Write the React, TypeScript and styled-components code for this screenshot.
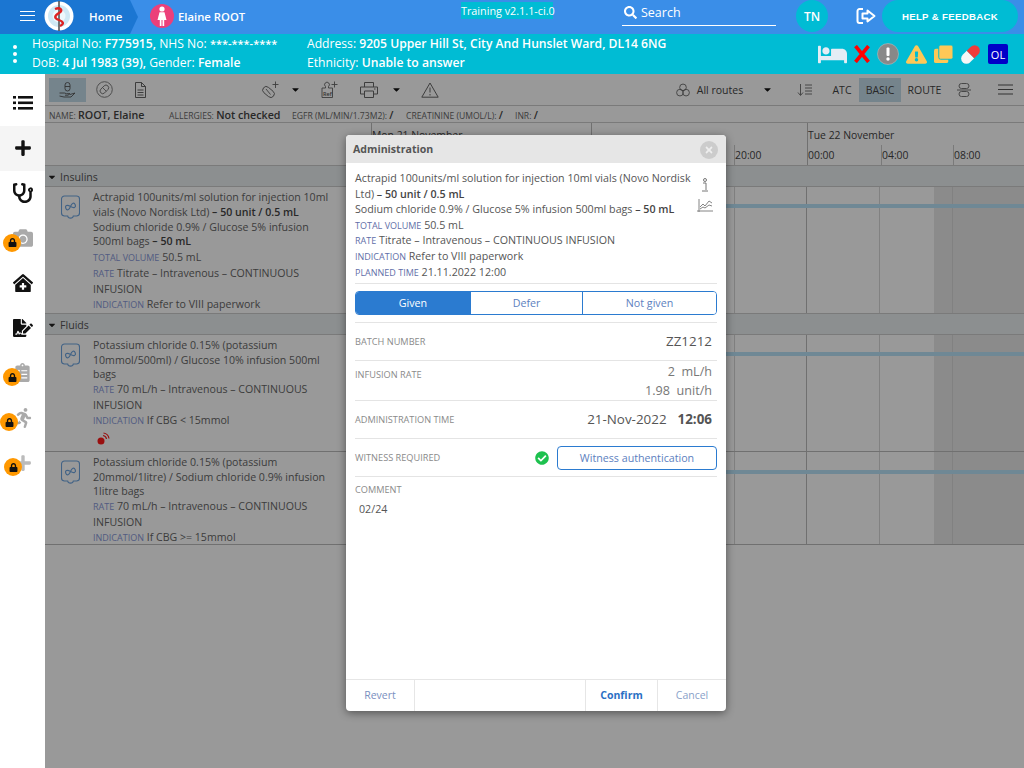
import React from "react";
import styled, { createGlobalStyle } from "styled-components";
import {
  FaBed, FaExclamationTriangle, FaStethoscope, FaClinicMedical, FaFileSignature,
  FaPlus, FaCamera, FaLock, FaRunning, FaCheckCircle, FaCaretDown, FaSearch, FaClipboardList, FaTimes,
} from "react-icons/fa";

const Global = createGlobalStyle`
  html, body { margin: 0; padding: 0; height: 100%; background: #fff; overflow: hidden; }
  * { box-sizing: border-box; }
  body { font-family: "Open Sans", "Noto Sans", sans-serif; color: #333; }
`;

const Page = styled.div`width: 1024px; height: 768px; display: flex; flex-direction: column; position: relative; overflow: hidden;`;
const TopBar = styled.header`height: 34px; padding-bottom: 2px; background: #3a8ee8; display: flex; align-items: center; color: #fff; flex: none;`;
const HomeCrumb = styled.div`
  width: 138px; height: 34px; margin-bottom: -2px; padding-bottom: 2px; background: #1b76d2; clip-path: polygon(0 0, 130px 0, 138px 17px, 130px 34px, 0 34px);
  display: flex; align-items: center; padding-left: 20px; flex: none;
`;
const Burger = styled.div`width: 15px; height: 10px; border-top: 1px solid #fff; border-bottom: 1px solid #fff; position: relative; margin-right: 9px;
  &::after { content: ""; position: absolute; left: 0; right: 0; top: 3px; height: 1px; background: #fff; }
`;
const HomeLabel = styled.span`font-size: 11.5px; font-weight: 600; margin-left: 15px;`;
const Avatar = styled.div`width: 24px; height: 24px; border-radius: 50%; background: #ec407a; margin-left: 12px; display: flex; align-items: center; justify-content: center; flex: none;`;
const PatientName = styled.span`font-size: 11.3px; font-weight: 600; margin-left: 4px; width: 283px; flex: none;`;
const TrainingTag = styled.div`font-size: 10.8px; line-height: 17px; height: 17px; background: #00bcd4; width: 92px; margin-top: -11px; white-space: nowrap; flex: none; text-align: center;`;
const SearchBox = styled.div`width: 154px; height: 25px; margin-left: 69px; border-bottom: 1px solid #fff; display: flex; align-items: center; gap: 4px; padding: 0 0 1px 2px; font-size: 12.5px; flex: none; position: relative; top: -2.5px;`;
const Initials = styled.div`width: 32px; height: 32px; border-radius: 50%; background: #00bcd4; margin-left: 20px; display: flex; align-items: center; justify-content: center; font-size: 12px; font-weight: 600; flex: none;`;
const LogoutBox = styled.div`width: 20px; margin-left: 28px; display: flex; flex: none;`;
const HelpButton = styled.div`width: 136px; height: 32px; border-radius: 16px; background: #00bcd4; margin-left: 6px; display: flex; align-items: center; justify-content: center; font: 700 9.6px "Liberation Sans", Arial, sans-serif; letter-spacing: .35px; flex: none;`;

const InfoBar = styled.div`height: 40px; background: #00bcd4; color: #fff; display: flex; align-items: center; font-size: 12.15px; flex: none; position: relative;`;
const Dots = styled.div`width: 32px; display: flex; flex-direction: column; align-items: center; gap: 3px; flex: none; padding-right: 2px;
  i { width: 4px; height: 4px; border-radius: 50%; background: #fff; display: block; }
`;
const InfoCol = styled.div<{ $w: number }>`width: ${p => p.$w}px; flex: none; line-height: 18.6px; white-space: nowrap;
  b { font-weight: 600; }
`;
const Mask = styled.b`font-size: 11px;`;
const StatusIcons = styled.div`display: flex; align-items: center; flex: 1; justify-content: flex-end; padding-right: 16px; gap: 7px;`;
const OLBadge = styled.div`width: 20px; height: 20px; background: #0000c8; border-radius: 2px; font-size: 11px; color: #fff; display: flex; align-items: center; justify-content: center;`;

const Body = styled.div`flex: 1; display: flex; min-height: 0;`;
const Sidebar = styled.nav`width: 45px; padding-top: 7px; flex: none; background: #fff; display: flex; flex-direction: column;`;
const SideItem = styled.div<{ $active?: boolean }>`height: 44.9px; display: flex; align-items: center; justify-content: center; position: relative; background: ${p => (p.$active ? "#f5f5f5" : "transparent")}; color: #111; flex: none;`;
const LockBadge = styled.div<{ $left: number }>`position: absolute; left: ${p => p.$left}px; top: 18px; width: 18px; height: 18px; border-radius: 50%; background: #ff9800; color: #111; display: flex; align-items: center; justify-content: center;`;

const Main = styled.main`flex: 1; position: relative; display: flex; flex-direction: column; min-width: 0; background: #fff;`;
const Toolbar = styled.div`height: 32px; display: flex; align-items: center; padding-left: 4px; border-bottom: 1px solid #ccc; flex: none;`;
const ToolSlot = styled.div<{ $w: number; $active?: boolean }>`width: ${p => p.$w}px; height: 24px; display: flex; align-items: center; justify-content: center; flex: none; background: ${p => (p.$active ? "#c4dcea" : "transparent")}; font-size: 10.5px; color: #444; white-space: nowrap;`;
const ToolGap = styled.div<{ $w: number }>`width: ${p => p.$w}px; flex: none;`;
const PatientLine = styled.div`height: 17px; padding: 1px 0 0 4px; display: flex; align-items: center; font-size: 8.6px; text-transform: uppercase; color: #666; flex: none; border-bottom: 1px solid #ccc; white-space: nowrap;`;
const LineItem = styled.div<{ $w: number }>`width: ${p => p.$w}px; flex: none; b { font-size: 10.7px; font-weight: 600; color: #444; text-transform: none; }`;

const TimeHead = styled.div`height: 43px; display: flex; padding-left: 326px; border-bottom: 1px solid #ccc; flex: none;`;
const DayCol = styled.div<{ $w: number }>`width: ${p => p.$w}px; flex: none; border-left: 1px solid #bbb; display: flex; flex-direction: column; font-size: 10.4px; color: #444; white-space: nowrap;`;
const DayName = styled.div`height: 22px; padding: 5px 0 0 0; line-height: 14px;`;
const Hours = styled.div`flex: 1; display: flex;`;
const Hour = styled.div<{ $w: number; $first?: boolean }>`width: ${p => p.$w}px; flex: none; padding: 3px 0 0 0; line-height: 15px; border-left: ${p => (p.$first ? "none" : "1px solid #ccc")};`;

const GroupHead = styled.div<{ $h: number; $top?: boolean }>`height: ${p => p.$h}px; display: flex; align-items: center; background: #eaeef0; border-bottom: 1px solid #ccc; border-top: ${p => (p.$top ? "1px solid #ccc" : "none")}; padding: 1px 0 0 2px; gap: 3px; font-size: 10.6px; color: #555; flex: none;`;
const MedRow = styled.div<{ $h: number; $line?: boolean }>`height: ${p => p.$h}px; display: flex; flex: none; border-bottom: ${p => (p.$line ? "1px solid #bbb" : "none")};`;
const MedInfo = styled.div`width: 326px; flex: none; display: flex; padding: 3px 0 0 16px;`;
const BagBox = styled.div`width: 32px; padding-top: 5px; flex: none;`;
const MedText = styled.div`width: 240px; font-size: 10.6px; line-height: 14.6px; color: #666; flex: none;
  b { font-weight: 600; color: #444; }
  p { margin: 0; }
  p + p { margin-top: .7px; }
`;
const RowTag = styled.span`font-size: 9px; color: #8898d8; text-transform: uppercase;`;
const Alarm = styled.div`margin: 2px 0 0 4px; line-height: 0;`;
const Timeline = styled.div<{ $bar: number }>`flex: 1; display: flex; position: relative;
  &::after { content: ""; position: absolute; left: 0; right: 0; top: ${p => p.$bar}px; height: 3.5px; background: #b9e3f8; }
`;
const GridCell = styled.div<{ $w: number; $strong?: boolean }>`
  width: ${p => p.$w}px; flex: none; border-left: 1px solid ${p => (p.$strong ? "#bbb" : "#d8d8d8")};
`;
const GridFill = styled.div`flex: 1; background: linear-gradient(to right, #e8e8e8 18px, #d8d8d8 18px, #d8d8d8 19px, #e8e8e8 19px);`;

const Scrim = styled.div`position: absolute; inset: 0; background: rgba(0,0,0,.4);`;
const Modal = styled.div`position: absolute; left: 346px; top: 135px; width: 380px; height: 576px; background: #fff; border-radius: 4px; box-shadow: 0 2px 8px rgba(0,0,0,.45); display: flex; flex-direction: column; overflow: hidden;`;
const ModalHead = styled.div`height: 28px; background: #e6e6e6; display: flex; align-items: center; justify-content: space-between; padding: 0 8px 1px 7px; flex: none; font-size: 10.6px; font-weight: 700; color: #555;`;
const CloseDot = styled.div`width: 18px; height: 18px; border-radius: 50%; background: #ccc; color: #eee; display: flex; align-items: center; justify-content: center; margin-top: 2px;`;
const ModalBody = styled.div`flex: 1; padding: 7px 9px 0; display: flex; flex-direction: column; min-height: 0;`;
const Summary = styled.div`position: relative; font-size: 10.7px; line-height: 15.6px; color: #555; height: 114px; padding-top: 1px; border-bottom: 1px solid #e4e4e4; flex: none; white-space: nowrap;
  b { font-weight: 600; color: #444; }
  p { margin: 0; }
`;
const ModalTag = styled.span`font-size: 9px; color: #5f6ea8; text-transform: uppercase;`;
const SummaryIcons = styled.div`position: absolute; right: 4px; top: 8px; display: flex; flex-direction: column; align-items: center; gap: 7px; color: #777; line-height: 0;`;
const Segment = styled.div`margin-top: 7px; height: 24px; display: grid; grid-template-columns: 114px 112px 1fr; border: 1px solid #2b7bd0; border-radius: 4px; overflow: hidden; flex: none; margin-bottom: 7px;`;
const SegItem = styled.div<{ $on?: boolean }>`display: flex; align-items: center; justify-content: center; font-size: 10.7px; background: ${p => (p.$on ? "#2b7bd0" : "#fff")}; color: ${p => (p.$on ? "#fff" : "#5d7fc0")}; border-left: ${p => (p.$on ? "none" : "1px solid #2b7bd0")};`;
const FieldRow = styled.div<{ $h: number }>`height: ${p => p.$h}px; border-top: 1px solid #e4e4e4; display: flex; justify-content: space-between; align-items: center; flex: none;`;
const FieldLabel = styled.div`font-size: 9.2px; color: #8a8a8a; text-transform: uppercase; white-space: nowrap;`;
const TopLabel = styled(FieldLabel)`align-self: flex-start; padding-top: 7px;`;
const FieldValue = styled.div`font-size: 12.6px; color: #777; text-align: right; padding-right: 5px; line-height: 19px; white-space: pre;`;
const DarkValue = styled(FieldValue)`font-size: 13.4px; color: #555; b { font-weight: 700; margin-left: 11px; color: #555; }`;
const WitnessWrap = styled.div`display: flex; align-items: center; gap: 8px;`;
const WitnessBtn = styled.div`width: 160px; height: 24px; border: 1px solid #2b7bd0; border-radius: 4px; display: flex; align-items: center; justify-content: center; font-size: 10.7px; color: #5d7fc0;`;
const CommentBox = styled.div`border-top: 1px solid #e4e4e4; padding-top: 6px; flex: none;`;
const CommentText = styled.div`font-size: 10.7px; color: #555; margin: 6px 0 0 4px;`;
const ModalFoot = styled.div`height: 32px; padding-bottom: 2px; border-top: 1px solid #e6e6e6; display: flex; flex: none;`;
const FootBtn = styled.div<{ $w: number; $strong?: boolean; $light?: boolean }>`width: ${p => p.$w}px; display: flex; align-items: center; justify-content: center; font-size: 10.5px; font-weight: ${p => (p.$strong ? 700 : 400)}; color: ${p => (p.$strong ? "#2b6fc4" : p.$light ? "#8a9fc9" : "#7a8fc0")}; border-right: 1px solid #e6e6e6; flex: none; margin-bottom: -2px; padding-bottom: 2px;
  &:last-child { border-right: none; }
`;
const FootSpacer = styled.div`flex: 1; border-right: 1px solid #e6e6e6; margin-bottom: -2px;`;

const Logo = () => (
  <svg width="30" height="30" viewBox="0 0 30 30">
    <circle cx="15" cy="15" r="14.5" fill="#fff" />
    <circle cx="15" cy="15" r="11" fill="#cfe9f5" />
    <circle cx="15" cy="15" r="6.5" fill="#eef8fc" />
    <path d="M15 0v30" stroke="#555" strokeWidth="1.6" />
    <path d="M11 8c5-2 9 1 4 4s-5 5 0 7 5 4 1 6" fill="none" stroke="#d22" strokeWidth="2.4" />
  </svg>
);
const Woman = () => (
  <svg width="12" height="20" viewBox="0 0 12 20" fill="#fff">
    <circle cx="6" cy="3" r="2.6" />
    <path d="M3.5 6.2h5l2 7.8H8.2v6H6.5v-6h-1v6H3.8v-6H1.5z" />
  </svg>
);
const Logout = () => (
  <svg width="20" height="18" viewBox="0 0 20 18" fill="none" stroke="#fff" strokeWidth="2" strokeLinejoin="round">
    <path d="M7 2H3.500A2 2 0 0 0 1.500 4v10a2 2 0 0 0 2 2H7" />
    <path d="M11.500 3.500L18.500 9l-7 5.500V11.500H6.500v-5h5z" />
  </svg>
);
const ExclaimDot = () => (
  <svg width="22" height="22" viewBox="0 0 22 22">
    <circle cx="11" cy="11" r="10.500" fill="#888" stroke="#bbb" strokeWidth=".6" />
    <rect x="9.500" y="4.500" width="3" height="8.500" rx="1" fill="#fff" />
    <circle cx="11" cy="16" r="1.700" fill="#fff" />
  </svg>
);
const Bag = () => (
  <svg width="19" height="26" viewBox="0 0 19 26" fill="none" stroke="#6ea5e0" strokeWidth="1.1">
    <path d="M3.500 1h12a3 3 0 0 1 3 3v14a3 3 0 0 1-3 3h-3.200c-.4 2.800-5.200 2.800-5.600 0H3.500a3 3 0 0 1-3-3V4a3 3 0 0 1 3-3z" />
    <path d="M4.500 11.500c0-3 2.500-3 5 0s5 3 5 0-2.500-3-5 0-5 3-5 0z" transform="rotate(-20 9.500 11.500)" />
  </svg>
);
const HandDrop = () => (
  <svg width="17" height="16" viewBox="0 0 17 16" fill="none" stroke="#555" strokeWidth=".9">
    <rect x="6" y=".5" width="5" height="8.500" rx="2.500" />
    <path d="M6 4.500h5" />
    <path d="M.5 11h5l2 .7h3.500l-2 1.500H6M11 12.500l5-1.500-4 4H5l-4.500-1" />
  </svg>
);
const Ban = () => (
  <svg width="17" height="17" viewBox="0 0 24 24" fill="none" stroke="#777" strokeWidth="1.300">
    <circle cx="12" cy="12" r="11" />
    <rect x="5" y="8" width="14" height="7.500" rx="3.700" transform="rotate(-45 12 12)" />
    <path d="M9.500 9.500l5 5" />
  </svg>
);
const Doc = () => (
  <svg width="11" height="16" viewBox="0 0 11 16" fill="none" stroke="#555" strokeWidth=".9">
    <path d="M.5.500h6l4 4v11H.5zM6.500.500v4h4M2.500 8h6M2.500 10.500h6M2.500 13h6" />
  </svg>
);
const PillPlus = () => (
  <svg width="18" height="17" viewBox="0 0 18 17" fill="none" stroke="#666" strokeWidth=".9">
    <rect x="1" y="7.500" width="13" height="7" rx="3.500" transform="rotate(40 7.500 11)" />
    <path d="M5 8l4.500 5.500M14.500 .5v6.500M11.500 3.500h6" />
  </svg>
);
const RefPlus = () => (
  <svg width="17" height="17" viewBox="0 0 17 17" fill="none" stroke="#666" strokeWidth=".9">
    <path d="M1 7h3.500V5.500a2.400 2.400 0 1 1 3 0V7H11.500v9.500H1z" />
    <path d="M13.500 .5v6M10.500 3.500h6" />
    <text x="2" y="14.500" fontSize="5.500" fill="#555" stroke="none" fontFamily="Open Sans" fontWeight="600">Ref</text>
  </svg>
);
const Printer = () => (
  <svg width="18" height="16" viewBox="0 0 18 16" fill="none" stroke="#666" strokeWidth="1">
    <path d="M4.500 5V.5h9V5M4.500 12H.5V5h17v7h-4M4.500 9h9v6.500h-9zM14 7h1.500" />
  </svg>
);
const Warn = () => (
  <svg width="18" height="16" viewBox="0 0 18 16" fill="none" stroke="#666" strokeWidth="1">
    <path d="M9 1L.8 15.200h16.400zM9 5.500v5M9 12v1.500" />
  </svg>
);
const Routes = () => (
  <svg width="14" height="14" viewBox="0 0 16 16" fill="none" stroke="#666" strokeWidth="1">
    <circle cx="8" cy="5" r="3.800" /><circle cx="4.500" cy="11" r="3.800" /><circle cx="11.500" cy="11" r="3.800" />
  </svg>
);
const SortIcon = () => (
  <svg width="16" height="14" viewBox="0 0 16 14" fill="none" stroke="#777" strokeWidth="1">
    <path d="M3.500 1v11M1 9.500l2.500 3 2.500-3M8 2h7M8 5h7M8 8h7M8 11h7" />
  </svg>
);
const LinkIcon = () => (
  <svg width="14" height="16" viewBox="0 0 14 16" fill="none" stroke="#777" strokeWidth="1">
    <rect x="2" y="1.500" width="10" height="5" rx="2.500" /><rect x="2" y="9.500" width="10" height="5" rx="2.500" /><path d="M0 8h14" />
  </svg>
);
const MenuIcon = () => (
  <svg width="15" height="11" viewBox="0 0 15 11" fill="none" stroke="#555" strokeWidth="1.200">
    <path d="M0 1h15M0 5.500h15M0 10h15" />
  </svg>
);
const ListIcon = () => (
  <svg width="20" height="14" viewBox="0 0 20 14" fill="#111">
    <rect x="0" y="0" width="3" height="2.600" /><rect x="5" y="0" width="15" height="2.600" />
    <rect x="0" y="5.500" width="3" height="2.600" /><rect x="5" y="5.500" width="15" height="2.600" />
    <rect x="0" y="11" width="3" height="2.600" /><rect x="5" y="11" width="15" height="2.600" />
  </svg>
);
const XMark = () => (
  <svg width="16" height="18" viewBox="0 0 16 18"><path d="M1.500 1l13 16M14.500 1l-13 16" stroke="#f00" strokeWidth="3.600" /></svg>
);
const Copies = () => (
  <svg width="19" height="19" viewBox="0 0 20 20" fill="#ffc857">
    <rect x="0" y="4" width="15" height="15" rx="2" />
    <rect x="5" y="0" width="15" height="15" rx="2" stroke="#00bcd4" strokeWidth="1" />
  </svg>
);
const Capsule = () => (
  <svg width="21" height="21" viewBox="0 0 20 20">
    <g transform="rotate(-45 10 10)">
      <path d="M10 5H4.500a5 5 0 0 0 0 10H10z" fill="#f6f6f6" />
      <path d="M10 5h5.500a5 5 0 0 1 0 10H10z" fill="#f03a3a" />
    </g>
  </svg>
);
const InfoIcon = () => (
  <svg width="12" height="14" viewBox="0 0 12 14" fill="none" stroke="#777" strokeWidth="1">
    <circle cx="6" cy="2" r="1.500" /><path d="M4 5h3v7M3 13h6" />
  </svg>
);
const ChartIcon = () => (
  <svg width="16" height="14" viewBox="0 0 16 14" fill="none" stroke="#777" strokeWidth=".9">
    <path d="M2 0v13M0 12h16M3 8l3-3 2 2 4-5 3 2M3 10l3-2 2 1 4-3 3 1" />
  </svg>
);
const WifiAlarm = () => (
  <svg width="14" height="14" viewBox="0 0 14 14" fill="none" stroke="#ff1a1a" strokeWidth="1.200">
    <circle cx="4" cy="10" r="3.500" fill="#ff1a1a" stroke="none" />
    <path d="M6 4.500a4 4 0 0 1 3.500 3.500M6.500 2a6.500 6.500 0 0 1 5.500 5.500" />
  </svg>
);

const caret = <FaCaretDown size={11} color="#111" />;

const Grid = ({ bar }: { bar: number }) => (
  <Timeline $bar={bar}>
    <GridCell $w={220} />
    <GridCell $w={143} $strong />
    <GridCell $w={72} />
    <GridCell $w={73} $strong />
    <GridCell $w={55} />
    <GridFill />
  </Timeline>
);

const sideIcons = [
  { el: <ListIcon /> },
  { el: <FaPlus size={18} />, active: true },
  { el: <FaStethoscope size={20} /> },
  { el: <FaCamera size={20} color="#aaa" />, lock: 3 },
  { el: <FaClinicMedical size={20} /> },
  { el: <FaFileSignature size={20} /> },
  { el: <FaClipboardList size={19} color="#aaa" />, lock: 3 },
  { el: <FaRunning size={20} color="#aaa" />, lock: 0 },
  { el: <FaPlus size={18} color="#bbb" />, lock: 4 },
];

export default function App() {
  return (
    <Page>
      <Global />
      <TopBar>
        <HomeCrumb><Burger /><Logo /><HomeLabel>Home</HomeLabel></HomeCrumb>
        <Avatar><Woman /></Avatar>
        <PatientName>Elaine ROOT</PatientName>
        <TrainingTag>Training v2.1.1-ci.0</TrainingTag>
        <SearchBox><FaSearch size={13} />Search</SearchBox>
        <Initials>TN</Initials>
        <LogoutBox><Logout /></LogoutBox>
        <HelpButton>HELP &amp; FEEDBACK</HelpButton>
      </TopBar>
      <InfoBar>
        <Dots><i /><i /><i /></Dots>
        <InfoCol $w={275}>
          <div>Hospital No: <b>F775915,</b> NHS No: <Mask>***-***-****</Mask></div>
          <div>DoB: <b>4 Jul 1983 (39),</b> Gender: <b>Female</b></div>
        </InfoCol>
        <InfoCol $w={380}>
          <div>Address: <b>9205 Upper Hill St, City And Hunslet Ward, DL14 6NG</b></div>
          <div>Ethnicity: <b>Unable to answer</b></div>
        </InfoCol>
        <StatusIcons>
          <FaBed size={29} color="#e4edf5" />
          <XMark />
          <ExclaimDot />
          <FaExclamationTriangle size={21} color="#ffc857" />
          <Copies />
          <Capsule />
          <OLBadge>OL</OLBadge>
        </StatusIcons>
      </InfoBar>
      <Body>
        <Sidebar>
          {sideIcons.map((s, i) => (
            <SideItem key={i} $active={s.active}>
              {s.el}
              {s.lock !== undefined && <LockBadge $left={s.lock}><FaLock size={9} /></LockBadge>}
            </SideItem>
          ))}
        </Sidebar>
        <Main>
          <Toolbar>
            <ToolSlot $w={37} $active><HandDrop /></ToolSlot>
            <ToolSlot $w={36}><Ban /></ToolSlot>
            <ToolSlot $w={36}><Doc /></ToolSlot>
            <ToolGap $w={99} />
            <ToolSlot $w={26}><PillPlus /></ToolSlot>
            <ToolSlot $w={24}>{caret}</ToolSlot>
            <ToolGap $w={5} />
            <ToolSlot $w={34}><RefPlus /></ToolSlot>
            <ToolGap $w={5} />
            <ToolSlot $w={36}><Printer /></ToolSlot>
            <ToolSlot $w={18}>{caret}</ToolSlot>
            <ToolGap $w={11} />
            <ToolSlot $w={28}><Warn /></ToolSlot>
            <ToolGap $w={228} />
            <ToolSlot $w={22}><Routes /></ToolSlot>
            <ToolSlot $w={52}>All routes</ToolSlot>
            <ToolSlot $w={42}>{caret}</ToolSlot>
            <ToolGap $w={7} />
            <ToolSlot $w={20}><SortIcon /></ToolSlot>
            <ToolGap $w={10} />
            <ToolSlot $w={34}>ATC</ToolSlot>
            <ToolSlot $w={42} $active>BASIC</ToolSlot>
            <ToolSlot $w={47}>ROUTE</ToolSlot>
            <ToolGap $w={6} />
            <ToolSlot $w={19}><LinkIcon /></ToolSlot>
            <ToolGap $w={24} />
            <ToolSlot $w={16}><MenuIcon /></ToolSlot>
          </Toolbar>
          <PatientLine>
            <LineItem $w={120}>Name: <b>ROOT, Elaine</b></LineItem>
            <LineItem $w={123}>Allergies: <b>Not checked</b></LineItem>
            <LineItem $w={114}>eGFR (mL/min/1.73m2): <b>/</b></LineItem>
            <LineItem $w={109}>Creatinine (umol/L): <b>/</b></LineItem>
            <LineItem $w={60}>INR: <b>/</b></LineItem>
          </PatientLine>
          <TimeHead>
            <DayCol $w={220}>
              <DayName>Mon 21 November</DayName>
            </DayCol>
            <DayCol $w={216}>
              <DayName />
              <Hours>
                <Hour $w={142} $first />
                <Hour $w={73}>20:00</Hour>
              </Hours>
            </DayCol>
            <DayCol $w={217}>
              <DayName>Tue 22 November</DayName>
              <Hours>
                <Hour $w={73} $first>00:00</Hour>
                <Hour $w={72}>04:00</Hour>
                <Hour $w={71}>08:00</Hour>
              </Hours>
            </DayCol>
          </TimeHead>
          <GroupHead $h={21}><FaCaretDown size={10} color="#222" />Insulins</GroupHead>
          <MedRow $h={126}>
            <MedInfo>
              <BagBox><Bag /></BagBox>
              <MedText>
                <p>Actrapid 100units/ml solution for injection 10ml vials (Novo Nordisk Ltd) <b>– 50 unit / 0.5 mL</b></p>
                <p>Sodium chloride 0.9% / Glucose 5% infusion 500ml bags <b>– 50 mL</b></p>
                <p><RowTag>Total volume</RowTag> 50.5 mL</p>
                <p><RowTag>Rate</RowTag> Titrate – Intravenous – CONTINUOUS INFUSION</p>
                <p><RowTag>Indication</RowTag> Refer to VIII paperwork</p>
              </MedText>
            </MedInfo>
            <Grid bar={17} />
          </MedRow>
          <GroupHead $h={22} $top><FaCaretDown size={10} color="#222" />Fluids</GroupHead>
          <MedRow $h={117} $line>
            <MedInfo>
              <BagBox><Bag /></BagBox>
              <MedText>
                <p>Potassium chloride 0.15% (potassium 10mmol/500ml) / Glucose 10% infusion 500ml bags</p>
                <p><RowTag>Rate</RowTag> 70 mL/h – Intravenous – CONTINUOUS INFUSION</p>
                <p><RowTag>Indication</RowTag> If CBG &lt; 15mmol</p>
                <Alarm><WifiAlarm /></Alarm>
              </MedText>
            </MedInfo>
            <Grid bar={17} />
          </MedRow>
          <MedRow $h={93} $line>
            <MedInfo>
              <BagBox><Bag /></BagBox>
              <MedText>
                <p>Potassium chloride 0.15% (potassium 20mmol/1litre) / Sodium chloride 0.9% infusion 1litre bags</p>
                <p><RowTag>Rate</RowTag> 70 mL/h – Intravenous – CONTINUOUS INFUSION</p>
                <p><RowTag>Indication</RowTag> If CBG &gt;= 15mmol</p>
              </MedText>
            </MedInfo>
            <Grid bar={18} />
          </MedRow>
          <Scrim />
        </Main>
      </Body>
      <Modal>
        <ModalHead>Administration<CloseDot><FaTimes size={10} /></CloseDot></ModalHead>
        <ModalBody>
          <Summary>
            <p>Actrapid 100units/ml solution for injection 10ml vials (Novo Nordisk<br />Ltd) <b>– 50 unit / 0.5 mL</b></p>
            <p>Sodium chloride 0.9% / Glucose 5% infusion 500ml bags <b>– 50 mL</b></p>
            <p><ModalTag>Total volume</ModalTag> 50.5 mL</p>
            <p><ModalTag>Rate</ModalTag> Titrate – Intravenous – CONTINUOUS INFUSION</p>
            <p><ModalTag>Indication</ModalTag> Refer to VIII paperwork</p>
            <p><ModalTag>Planned time</ModalTag> 21.11.2022 12:00</p>
            <SummaryIcons><InfoIcon /><ChartIcon /></SummaryIcons>
          </Summary>
          <Segment>
            <SegItem $on>Given</SegItem>
            <SegItem>Defer</SegItem>
            <SegItem>Not given</SegItem>
          </Segment>
          <FieldRow $h={38}>
            <FieldLabel>Batch number</FieldLabel>
            <DarkValue>ZZ1212</DarkValue>
          </FieldRow>
          <FieldRow $h={40}>
            <TopLabel>Infusion rate</TopLabel>
            <FieldValue>{"2  mL/h\n1.98  unit/h"}</FieldValue>
          </FieldRow>
          <FieldRow $h={38}>
            <FieldLabel>Administration time</FieldLabel>
            <DarkValue>21-Nov-2022<b>12:06</b></DarkValue>
          </FieldRow>
          <FieldRow $h={38}>
            <FieldLabel>Witness required</FieldLabel>
            <WitnessWrap><FaCheckCircle size={14} color="#1ec14f" /><WitnessBtn>Witness authentication</WitnessBtn></WitnessWrap>
          </FieldRow>
          <CommentBox>
            <FieldLabel>Comment</FieldLabel>
            <CommentText>02/24</CommentText>
          </CommentBox>
        </ModalBody>
        <ModalFoot>
          <FootBtn $w={69}>Revert</FootBtn>
          <FootSpacer />
          <FootBtn $w={72} $strong>Confirm</FootBtn>
          <FootBtn $w={68} $light>Cancel</FootBtn>
        </ModalFoot>
      </Modal>
    </Page>
  );
}
